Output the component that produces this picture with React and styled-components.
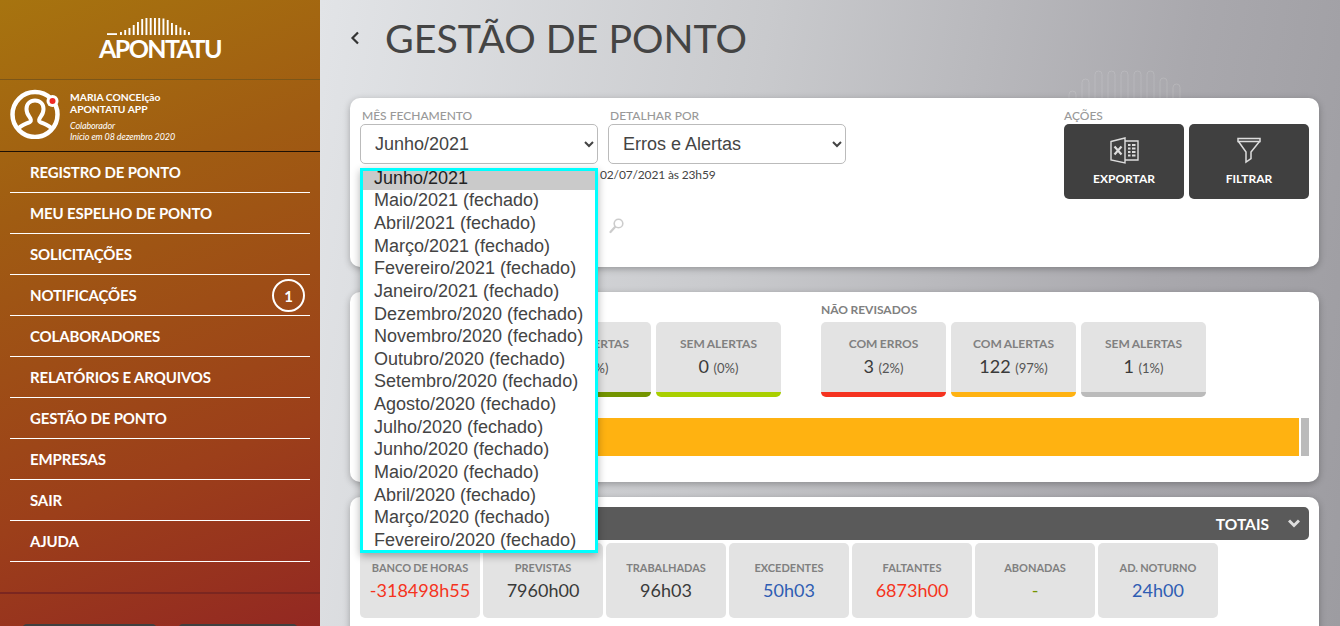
import React from "react";
import styled, { createGlobalStyle } from "styled-components";

const Global = createGlobalStyle`
  html, body { margin: 0; padding: 0; height: 100%; }
  body { font-family: "Lato", "Liberation Sans", sans-serif; color: #333; }
  * { box-sizing: border-box; }
`;

const Page = styled.div`
  display: flex;
  width: 100%;
  height: 100vh;
  overflow: hidden;
`;

const Sidebar = styled.aside`
  flex: 0 0 320px;
  height: 626px;
  overflow: hidden;
  background: linear-gradient(160deg, #a7740f 0%, #a05c12 30%, #9c3f1a 72%, #932822 100%);
  color: #fff;
`;

const LogoBox = styled.div`
  height: 80px;
  padding-top: 16px;
  border-bottom: 1px solid #7c5618;
  display: flex;
  flex-direction: column;
  align-items: center;
`;

const LogoText = styled.div`
  font-size: 25px;
  font-weight: 700;
  line-height: 24px;
  letter-spacing: -1.6px;
  color: #fff;
`;

const UserBox = styled.div`
  height: 72px;
  padding: 9px 0 0 10px;
  border-bottom: 1px solid #1d1005;
  display: flex;
  gap: 10px;
`;

const UserText = styled.div`
  padding-top: 2px;
`;

const UserName = styled.div`
  font-size: 10.3px;
  font-weight: 700;
  line-height: 12px;
`;

const UserMetaBlock = styled.div`
  margin-top: 6px;
`;

const UserMeta = styled.div`
  font-size: 9px;
  font-style: italic;
  line-height: 10.5px;
  letter-spacing: -0.1px;
`;

const Nav = styled.nav`
  padding: 0 10px;
  display: flex;
  flex-direction: column;
`;

const NavItem = styled.a`
  height: 41px;
  padding: 0 5px 0 20px;
  display: flex;
  align-items: center;
  justify-content: space-between;
  border-bottom: 1px solid #fff;
  font-size: 15px;
  font-weight: 700;
  letter-spacing: -0.15px;
  color: #fff;
`;

const Badge = styled.span`
  width: 33px;
  height: 33px;
  margin-top: 1px;
  border: 2px solid #fff;
  border-radius: 50%;
  display: flex;
  align-items: center;
  justify-content: center;
  font-size: 15px;
  font-weight: 700;
`;

const SideFooter = styled.div`
  margin-top: 30px;
  height: 40px;
  border-top: 2px solid #7b2620;
  padding: 30px 22px 0;
  display: flex;
  justify-content: space-between;
`;

const FooterButton = styled.div`
  height: 10px;
  width: ${(p) => p.$w}px;
  border-radius: 5px 5px 0 0;
  background: #404040;
`;

const Main = styled.main`
  position: relative;
  flex: 1;
  height: 626px;
  overflow: hidden;
  padding: 0 21px 0 30px;
  background: linear-gradient(100deg, #e2e4e7 0%, #c9cacd 40%, #a9a8ad 78%, #9d9ca1 100%);
`;

const Watermark = styled.svg`
  position: absolute;
  left: 746px;
  top: 68px;
`;

const TitleRow = styled.header`
  position: relative;
  height: 98px;
  padding-bottom: 20px;
  display: flex;
  align-items: flex-start;
  gap: 25px;
`;

const BackIcon = styled.svg`
  margin-top: 31px;
`;

const Title = styled.h1`
  margin: 14px 0 0;
  font-size: 39.35px;
  font-weight: 400;
  line-height: 48px;
  color: #444;
  white-space: nowrap;
`;

const Card = styled.section`
  position: relative;
  background: #fff;
  border-radius: 10px;
  box-shadow: 0 2px 7px rgba(0, 0, 0, 0.28);
  padding: 10px;
  height: ${(p) => p.$h}px;
  margin-bottom: ${(p) => p.$after}px;
`;

const FilterRow = styled.div`
  display: flex;
  justify-content: space-between;
`;

const Fields = styled.div`
  display: flex;
  flex-direction: column;
`;

const SelectRow = styled.div`
  display: flex;
  gap: 10px;
`;

const Field = styled.label`
  display: flex;
  flex-direction: column;
`;

const FieldLabel = styled.span`
  display: block;
  height: 16px;
  font-size: 12px;
  line-height: 15px;
  color: #999;
  font-weight: 500;
  padding-left: ${(p) => (p.$flush ? 0 : 2)}px;
`;

const Select = styled.select`
  width: 238px;
  height: 40px;
  padding: 0 10px;
  background: #fff;
  border: 1px solid #bbb;
  border-radius: 5px;
  font-family: "Liberation Sans", Arial, sans-serif;
  font-size: 18px;
  color: #444;
`;

const Deadline = styled.div`
  margin: 3px 0 0 240px;
  font-size: 12px;
  line-height: 15px;
  letter-spacing: -0.15px;
  color: #444;
`;

const SearchRow = styled.div`
  margin: 36px 0 0 249px;
`;

const Actions = styled.div`
  display: flex;
  flex-direction: column;
`;

const ActionButtons = styled.div`
  display: flex;
  gap: 5px;
`;

const ActionButton = styled.button`
  width: 120px;
  height: 75px;
  padding: 13px 0 0;
  border: 0;
  border-radius: 5px;
  background: #404040;
  color: #fff;
  font-family: inherit;
  font-size: 12px;
  font-weight: 700;
  display: flex;
  flex-direction: column;
  align-items: center;
  gap: 7px;
`;

const Groups = styled.div`
  display: flex;
  padding-left: 36px;
  gap: 40px;
`;

const Group = styled.div`
  display: flex;
  flex-direction: column;
`;

const GroupLabel = styled.div`
  font-size: 12px;
  font-weight: 700;
  line-height: 15px;
  height: 20px;
  word-spacing: -0.5px;
  color: #808080;
`;

const Tiles = styled.div`
  display: flex;
  gap: ${(p) => p.$gap}px;
`;

const Tile = styled.div`
  width: ${(p) => p.$w}px;
  height: 75px;
  border-radius: 5px;
  background: #e3e3e3;
  border-bottom: ${(p) => (p.$bar ? `5px solid ${p.$bar}` : "0")};
  padding-top: ${(p) => (p.$bar ? 14 : 17)}px;
  text-align: center;
`;

const TileLabel = styled.div`
  font-size: ${(p) => p.$size}px;
  font-weight: 700;
  line-height: 15px;
  word-spacing: -0.5px;
  color: #808080;
`;

const TileValue = styled.div`
  font-size: 18px;
  line-height: 24px;
  margin-top: 3px;
  color: ${(p) => p.$color || "#3a3a3a"};
`;

const Pct = styled.small`
  font-size: 13px;
  color: #555;
`;

const Bar = styled.div`
  display: flex;
  height: 38px;
  margin-top: 21px;
  gap: 2px;
`;

const BarPart = styled.div`
  flex: ${(p) => p.$grow} 0 0;
  background: ${(p) => p.$color};
`;

const TotalsBar = styled.div`
  height: 33px;
  border-radius: 5px;
  background: #5a5a5a;
  padding-right: 9px;
  display: flex;
  align-items: center;
  justify-content: flex-end;
  gap: 19px;
  color: #fff;
  font-size: 15.5px;
  font-weight: 700;
  margin-bottom: 3px;
`;

const Dropdown = styled.ul`
  position: absolute;
  left: 40px;
  top: 168px;
  width: 238px;
  height: 385px;
  margin: 0;
  padding: 0;
  list-style: none;
  overflow: hidden;
  background: #fff;
  border: 3px solid #00ffff;
  box-shadow: 0 3px 8px rgba(0, 0, 0, 0.3);
  font-family: "Liberation Sans", Arial, sans-serif;
  font-size: 18px;
  color: #444;
`;

const Option = styled.li`
  height: 22.65px;
  line-height: 21px;
  padding-left: 11px;
  white-space: nowrap;
  background: ${(p) => (p.$selected ? "#cacaca" : "transparent")};
  color: ${(p) => (p.$selected ? "#222" : "#444")};
  &:first-child { margin-top: -3.3px; }
`;

const logoBars = [3, 5, 7, 10, 13, 16, 17, 17, 17, 17, 16.5, 15, 12, 10, 7.5, 5, 3];

const Logo = () => (
  <svg width="122" height="20" viewBox="0 0 122 20" aria-hidden="true">
    <rect x="8" y="17.2" width="10" height="1.8" fill="#fff" />
    {logoBars.map((h, i) => (
      <rect key={i} x={21 + i * 4.25} y={19 - h} width="1.9" height={h} fill="#fff" />
    ))}
  </svg>
);

const Avatar = () => (
  <svg width="50" height="50" viewBox="0 0 50 50" aria-hidden="true" fill="none">
    <circle cx="25" cy="25.5" r="22.5" stroke="#fff" strokeWidth="4.5" />
    <path
      d="M8 40c3-4 8-5 12-7 1.500-.8 1-3-.5-5-2-2.500-3-5-3-8 0-5 3.500-8.500 8.500-8.500s8.500 3.500 8.500 8.500c0 3-1 5.500-3 8-1.500 2-2 4.200-.5 5 4 2 9 3 12 7"
      stroke="#fff"
      strokeWidth="4"
      strokeLinejoin="round"
    />
    <circle cx="42.500" cy="12" r="6" fill="#fff" />
    <circle cx="42.500" cy="12" r="3" fill="#ee2a24" />
  </svg>
);

const ExcelIcon = () => (
  <svg width="29" height="27" viewBox="0 0 29 27" fill="none" stroke="#ddd" strokeWidth="1.4" aria-hidden="true">
    <path d="M1 4.500 15 1v25L1 23z" />
    <path d="M15 4h13v19H15" />
    <path d="M4.500 9.500l7 8M11.500 9.500l-7 8" strokeWidth="2.200" />
    <path d="M18 8h2.500M22 8h3.500M18 11.500h2.500M22 11.500h3.500M18 15h2.500M22 15h3.500M18 18.500h2.500M22 18.500h3.500" strokeWidth="2" />
  </svg>
);

const FunnelIcon = () => (
  <svg width="24" height="27" viewBox="0 0 24 27" fill="none" stroke="#ddd" strokeWidth="1.5" aria-hidden="true">
    <path d="M1 1.500h22v3H1z" />
    <path d="M1.500 4.500 9 15v10l5-3.500V15l8.500-10.500" />
  </svg>
);

const SearchIcon = () => (
  <svg width="15" height="16" viewBox="0 0 15 16" fill="none" stroke="#ccc" aria-hidden="true">
    <circle cx="9.500" cy="5.500" r="4.300" strokeWidth="1.600" />
    <path d="M6 9 1.500 14" strokeWidth="2.200" strokeLinecap="round" />
  </svg>
);

const waterBars = [7, 19, 27, 27, 27, 27, 27, 20, 14];

const months = [
  "Maio/2021", "Abril/2021", "Março/2021", "Fevereiro/2021", "Janeiro/2021",
  "Dezembro/2020", "Novembro/2020", "Outubro/2020", "Setembro/2020", "Agosto/2020",
  "Julho/2020", "Junho/2020", "Maio/2020", "Abril/2020", "Março/2020", "Fevereiro/2020",
];

const navItems = [
  "REGISTRO DE PONTO", "MEU ESPELHO DE PONTO", "SOLICITAÇÕES", "NOTIFICAÇÕES", "COLABORADORES",
  "RELATÓRIOS E ARQUIVOS", "GESTÃO DE PONTO", "EMPRESAS", "SAIR", "AJUDA",
];

const revised = [
  { label: "COM ERROS", value: "0", pct: "(0%)", bar: "#f53320" },
  { label: "COM ALERTAS", value: "0", pct: "(0%)", bar: "#739400" },
  { label: "SEM ALERTAS", value: "0", pct: "(0%)", bar: "#a9cf00" },
];

const unrevised = [
  { label: "COM ERROS", value: "3", pct: "(2%)", bar: "#f53320" },
  { label: "COM ALERTAS", value: "122", pct: "(97%)", bar: "#ffb211" },
  { label: "SEM ALERTAS", value: "1", pct: "(1%)", bar: "#bbbbbb" },
];

const totals = [
  { label: "BANCO DE HORAS", value: "-318498h55", color: "#f53320" },
  { label: "PREVISTAS", value: "7960h00" },
  { label: "TRABALHADAS", value: "96h03" },
  { label: "EXCEDENTES", value: "50h03", color: "#2f5db3" },
  { label: "FALTANTES", value: "6873h00", color: "#f53320" },
  { label: "ABONADAS", value: "-", color: "#739400" },
  { label: "AD. NOTURNO", value: "24h00", color: "#2f5db3" },
];

const StatTiles = ({ items }) => (
  <Tiles $gap={5}>
    {items.map((t) => (
      <Tile key={t.label} $w={125} $bar={t.bar}>
        <TileLabel $size={12}>{t.label}</TileLabel>
        <TileValue>
          {t.value} <Pct>{t.pct}</Pct>
        </TileValue>
      </Tile>
    ))}
  </Tiles>
);

export default function App() {
  return (
    <Page>
      <Global />
      <Sidebar>
        <LogoBox>
          <Logo />
          <LogoText>APONTATU</LogoText>
        </LogoBox>
        <UserBox>
          <Avatar />
          <UserText>
            <UserName>MARIA CONCEIção</UserName>
            <UserName>APONTATU APP</UserName>
            <UserMetaBlock>
              <UserMeta>Colaborador</UserMeta>
              <UserMeta>Início em 08 dezembro 2020</UserMeta>
            </UserMetaBlock>
          </UserText>
        </UserBox>
        <Nav>
          {navItems.map((item) => (
            <NavItem key={item}>
              {item}
              {item === "NOTIFICAÇÕES" && <Badge>1</Badge>}
            </NavItem>
          ))}
        </Nav>
        <SideFooter>
          <FooterButton $w={135} />
          <FooterButton $w={120} />
        </SideFooter>
      </Sidebar>
      <Main>
        <Watermark width="125" height="30" viewBox="0 0 125 30" fill="none" aria-hidden="true">
          {waterBars.map((h, i) => (
            <rect key={i} x={3 + i * 13} y={30 - h} width="7" height={h + 6} rx="3.500" stroke="#ffffff" strokeOpacity="0.14" />
          ))}
        </Watermark>
        <TitleRow>
          <BackIcon width="10" height="14" viewBox="0 0 10 14" fill="none" stroke="#333" strokeWidth="2.200" aria-hidden="true">
            <path d="M8 1.500 2.500 7 8 12.500" />
          </BackIcon>
          <Title>GESTÃO DE PONTO</Title>
        </TitleRow>
        <Card $h={169} $after={25}>
          <FilterRow>
            <Fields>
              <SelectRow>
                <Field>
                  <FieldLabel>MÊS FECHAMENTO</FieldLabel>
                  <Select defaultValue="Junho/2021">
                    <option>Junho/2021</option>
                  </Select>
                </Field>
                <Field>
                  <FieldLabel>DETALHAR POR</FieldLabel>
                  <Select defaultValue="Erros e Alertas">
                    <option>Erros e Alertas</option>
                  </Select>
                </Field>
              </SelectRow>
              <Deadline>02/07/2021 às 23h59</Deadline>
              <SearchRow>
                <SearchIcon />
              </SearchRow>
            </Fields>
            <Actions>
              <Field>
                <FieldLabel $flush>AÇÕES</FieldLabel>
              </Field>
              <ActionButtons>
                <ActionButton>
                  <ExcelIcon />
                  EXPORTAR
                </ActionButton>
                <ActionButton>
                  <FunnelIcon />
                  FILTRAR
                </ActionButton>
              </ActionButtons>
            </Actions>
          </FilterRow>
        </Card>
        <Card $h={190} $after={15}>
          <Groups>
            <Group>
              <GroupLabel>REVISADOS</GroupLabel>
              <StatTiles items={revised} />
            </Group>
            <Group>
              <GroupLabel>NÃO REVISADOS</GroupLabel>
              <StatTiles items={unrevised} />
            </Group>
          </Groups>
          <Bar>
            <BarPart $grow={2} $color="#f53320" />
            <BarPart $grow={97} $color="#ffb211" />
            <BarPart $grow={0.85} $color="#bbbbbb" />
          </Bar>
        </Card>
        <Card $h={150} $after={0}>
          <TotalsBar>
            TOTAIS
            <svg width="12" height="9" viewBox="0 0 12 9" fill="none" stroke="#ddd" strokeWidth="3" aria-hidden="true">
              <path d="M1 1.500 6 6.500 11 1.500" />
            </svg>
          </TotalsBar>
          <Tiles $gap={3}>
            {totals.map((t) => (
              <Tile key={t.label} $w={120}>
                <TileLabel $size={11}>{t.label}</TileLabel>
                <TileValue $color={t.color}>{t.value}</TileValue>
              </Tile>
            ))}
          </Tiles>
        </Card>
        <Dropdown>
          <Option $selected>Junho/2021</Option>
          {months.map((m, i) => (
            <Option key={i}>{m} (fechado)</Option>
          ))}
        </Dropdown>
      </Main>
    </Page>
  );
}
